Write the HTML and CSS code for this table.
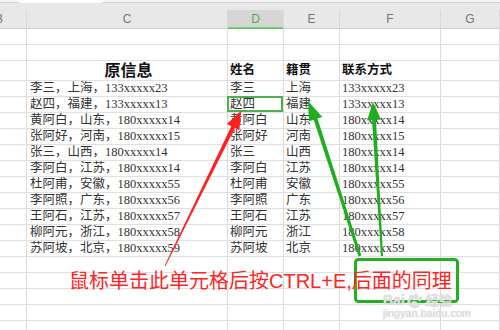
FILE: index.html
```html
<!DOCTYPE html>
<html lang="zh">
<head>
<meta charset="utf-8">
<title>表格</title>
<link rel="stylesheet" href="styles.css">
</head>
<body>
<div class="sheet">
  <div class="tabs"><div class="tab"></div></div>
  <div class="band"></div>
  <div class="row head">
    <div class="hc colb"><span class="colb-txt">B</span></div>
    <div class="hc">C</div>
    <div class="hc sel">D</div>
    <div class="hc">E</div>
    <div class="hc">F</div>
    <div class="hc">G</div>
  </div>
  <div class="row"><div></div><div></div><div></div><div></div><div></div><div></div></div>
  <div class="row"><div></div><div></div><div></div><div></div><div></div><div></div></div>
  <div class="row title">
    <div></div><div class="big">原信息</div><div class="bold">姓名</div><div class="bold">籍贯</div><div class="bold">联系方式</div><div></div>
  </div>
  <div class="row data"><div></div><div class="src">李三，上海，133xxxxx23</div><div>李三</div><div>上海</div><div>133xxxxx23</div><div></div></div>
  <div class="row data"><div></div><div class="src">赵四，福建，133xxxxx13</div><div class="cur">赵四</div><div>福建</div><div>133xxxxx13</div><div></div></div>
  <div class="row data"><div></div><div class="src">黄阿白，山东，180xxxxx14</div><div>黄阿白</div><div>山东</div><div>180xxxxx14</div><div></div></div>
  <div class="row data"><div></div><div class="src">张阿好，河南，180xxxxx15</div><div>张阿好</div><div>河南</div><div>180xxxxx15</div><div></div></div>
  <div class="row data"><div></div><div class="src">张三，山西，180xxxxx14</div><div>张三</div><div>山西</div><div>180xxxxx14</div><div></div></div>
  <div class="row data"><div></div><div class="src">李阿白，江苏，180xxxxx14</div><div>李阿白</div><div>江苏</div><div>180xxxxx14</div><div></div></div>
  <div class="row data"><div></div><div class="src">杜阿甫，安徽，180xxxxx55</div><div>杜阿甫</div><div>安徽</div><div>180xxxxx55</div><div></div></div>
  <div class="row data"><div></div><div class="src">李阿照，广东，180xxxxx56</div><div>李阿照</div><div>广东</div><div>180xxxxx56</div><div></div></div>
  <div class="row data"><div></div><div class="src">王阿石，江苏，180xxxxx57</div><div>王阿石</div><div>江苏</div><div>180xxxxx57</div><div></div></div>
  <div class="row data"><div></div><div class="src">柳阿元，浙江，180xxxxx58</div><div>柳阿元</div><div>浙江</div><div>180xxxxx58</div><div></div></div>
  <div class="row data"><div></div><div class="src">苏阿坡，北京，180xxxxx59</div><div>苏阿坡</div><div>北京</div><div>180xxxxx59</div><div></div></div>
  <div class="row"><div></div><div></div><div></div><div></div><div></div><div></div></div>
  <div class="row"><div></div><div></div><div></div><div></div><div></div><div></div></div>
  <div class="row"><div></div><div></div><div></div><div></div><div></div><div></div></div>
  <div class="row"><div></div><div></div><div></div><div></div><div></div><div></div></div>
  <div class="row"><div></div><div></div><div></div><div></div><div></div><div></div></div>
</div>

<svg class="marks" width="500" height="330" viewBox="0 0 500 330">
  <polygon class="red" points="164.6,265.8 165.4,266.2 234.9,128.1 239.4,130.3 241,111 226.8,124.1 231.3,126.3"/>
  <polygon class="green" points="358.6,256.5 361.4,255.5 317.5,118.5 322.3,116.9 308,101 308.9,121.3 313.7,119.7"/>
  <polygon class="green" points="381,256.1 383,255.9 376,119.9 381,119.6 373,102 367,120.4 372,120.1"/>
  <rect class="box" x="355.5" y="259.5" width="102" height="42" rx="3" ry="3"/>
</svg>

<div class="note">鼠标单击此单元格后按CTRL+E,后面的同理</div>

<div class="wm">
  <div class="wm-logo">
    <span class="wm-bai">Bai</span>
    <svg class="wm-paw" width="16" height="14" viewBox="0 0 18 16">
      <ellipse cx="5" cy="4" rx="2" ry="2.6"/>
      <ellipse cx="10" cy="2.8" rx="2" ry="2.6"/>
      <ellipse cx="14.5" cy="6" rx="1.8" ry="2.3"/>
      <ellipse cx="2" cy="8.5" rx="1.7" ry="2.2"/>
      <path d="M8 8 C5 8 3 12 4 14 C5 16 11 16 13 14 C14.5 12 11 8 8 8 Z"/>
    </svg>
    <span class="wm-jy">经验</span>
  </div>
  <div class="wm-url">jingyan.baidu.com</div>
</div>
</body>
</html>
```

FILE: styles.css
```css
html, body {
  margin: 0;
  padding: 0;
  background: #ffffff;
}
body {
  width: 500px;
  height: 330px;
  overflow: hidden;
  position: relative;
  font-family: "Liberation Serif", "Noto Sans CJK SC", serif;
}
.sheet {
  width: 500px;
  display: flex;
  flex-direction: column;
}
.tabs {
  height: 3px;
  background: #f6f6f6;
  box-sizing: border-box;
  border-bottom: 1px solid #d4d4d4;
  display: flex;
  padding-left: 18px;
}
.tab {
  width: 85px;
  height: 3px;
  background: #ffffff;
  border-radius: 0 0 3px 3px;
}
.band {
  height: 7px;
  background: #e8e8e8;
}
.row {
  display: grid;
  grid-template-columns: 27px 201px 56px 56px 101px 1fr;
  height: 16px;
}
.row > div {
  box-sizing: border-box;
  border-right: 1px solid #dadada;
  border-bottom: 1px solid #e0e0e0;
  white-space: nowrap;
  overflow: visible;
  position: relative;
}
.row.head {
  height: 19px;
  background: #e8e8e8;
}
.row.head > .hc {
  border-right: 1px solid #d9d9d9;
  border-bottom: 1px solid #cfcfcf;
  font-family: "Liberation Sans", "Noto Sans", sans-serif;
  font-size: 12px;
  color: #767676;
  text-align: center;
  line-height: 18px;
}
.row.head > .colb {
  text-align: left;
  overflow: hidden;
}
.colb-txt {
  display: inline-block;
  margin-left: -5px;
}
.row.head > .sel {
  background: #d6d6d6;
  color: #4faf4f;
  border-bottom: 1px solid #62bf62;
  box-shadow: inset 0 -1px 0 #7fcb7f;
}
.row.title {
  height: 20px;
}
.title > div {
  line-height: 19px;
  color: #111111;
}
.title > .big {
  text-align: center;
  font-size: 16px;
  font-weight: 700;
  padding-left: 3px;
}
.title > .bold {
  font-size: 12.5px;
  font-weight: 700;
  padding-left: 2px;
}
.data > div {
  font-size: 12.5px;
  line-height: 15px;
  color: #333333;
  padding-left: 2px;
}
.data > .src {
  padding-left: 3px;
}
.cur::after {
  content: "";
  position: absolute;
  left: -1px;
  top: -1px;
  right: 0;
  bottom: 0;
  border: 2px solid #4fae4f;
}
.marks {
  position: absolute;
  left: 0;
  top: 0;
}
.marks .red {
  fill: #ff2121;
}
.marks .green {
  fill: #20ae20;
}
.marks .box {
  fill: none;
  stroke: #22b022;
  stroke-width: 3;
}
.note {
  position: absolute;
  left: 69px;
  top: 271px;
  font-family: "Liberation Sans", "Noto Sans CJK SC", sans-serif;
  font-size: 20px;
  line-height: 20px;
  color: #ff2525;
  white-space: nowrap;
}
.wm {
  position: absolute;
  left: 383px;
  top: 294px;
  color: #e2e2e2;
  font-family: "Liberation Sans", "Noto Sans CJK SC", sans-serif;
  display: flex;
  flex-direction: column;
  gap: 1px;
}
.wm-logo {
  display: flex;
  align-items: center;
  height: 13px;
  text-shadow: 0 0 1px #b8b8b8;
}
.wm-bai {
  font-size: 14px;
  font-weight: 700;
  line-height: 13px;
}
.wm-paw {
  fill: #e2e2e2;
  stroke: #bdbdbd;
  stroke-width: 0.6;
  margin: 0 3px 0 2px;
}
.wm-jy {
  font-size: 13px;
  line-height: 13px;
  font-weight: 700;
}
.wm-url {
  font-size: 10.5px;
  line-height: 11px;
  letter-spacing: 0.2px;
  text-shadow: 0 0 1px #bdbdbd;
}
```
